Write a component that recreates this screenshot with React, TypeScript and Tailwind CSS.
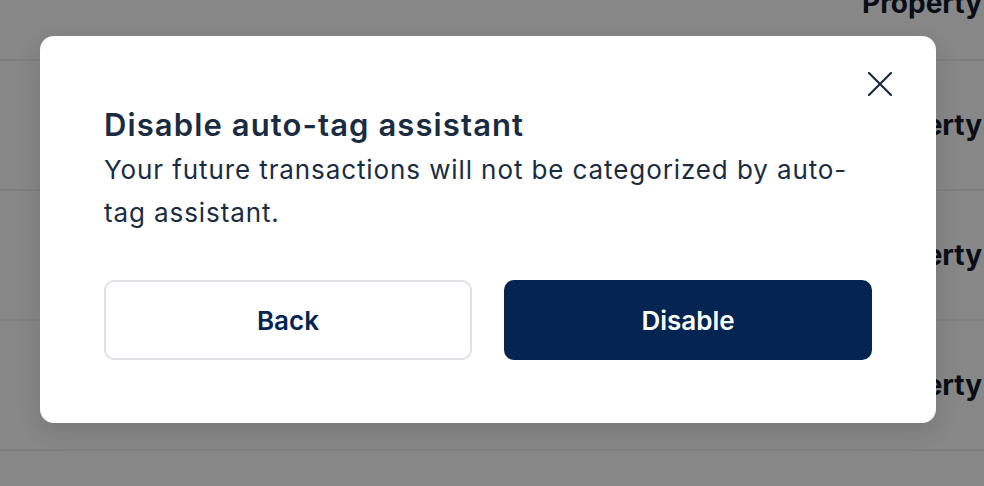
const rows = [0, 1, 2];

export default function App() {
  return (
    <div className="relative h-[486px] w-[984px] overflow-hidden bg-white font-['Inter',sans-serif]">
      {/* page behind the overlay */}
      <div className="flex flex-col">
        <div className="flex h-[61px] items-end border-b-2 border-[#f0f0f0] pb-[39px] pl-[862px]">
          <span className="whitespace-nowrap text-[28px] font-bold leading-[34px] text-[#0e1b2c]">
            Property
          </span>
        </div>
        {rows.map((r) => (
          <div
            key={r}
            className="flex h-[130px] items-center border-b-2 border-[#f0f0f0] pl-[862px]"
          >
            <span className="whitespace-nowrap text-[28px] font-bold text-[#0e1b2c]">
              Property
            </span>
          </div>
        ))}
      </div>

      {/* overlay */}
      <div className="absolute inset-0 bg-black/[0.47]" />

      {/* dialog */}
      <div className="absolute left-[40px] top-[36px] w-[896px] rounded-[14px] bg-white px-16 pb-[63px] pt-[68px] shadow-[0_8px_24px_rgba(0,0,0,0.12)]">
        <button className="absolute right-[44px] top-[36px] text-[#1b2b3e]">
          <svg width="24" height="24" viewBox="0 0 24 24" fill="none">
            <path
              d="M1 1L23 23M23 1L1 23"
              stroke="currentColor"
              strokeWidth="2.2"
              strokeLinecap="round"
            />
          </svg>
        </button>
        <h2 className="text-[31px] font-semibold leading-[42px] tracking-[1.1px] text-[#1a2c42]">
          Disable auto-tag assistant
        </h2>
        <p className="mt-[2px] text-[26px] leading-[43px] tracking-[0.9px] text-[#1a2c42]">
          Your future transactions will not be categorized by auto-tag assistant.
        </p>
        <div className="mt-[46px] grid grid-cols-2 gap-8">
          <button className="h-[80px] rounded-[10px] border-2 border-[#dde1e6] bg-white text-[26px] font-semibold text-[#042452]">
            Back
          </button>
          <button className="h-[80px] rounded-[10px] bg-[#042452] text-[26px] font-semibold text-white">
            Disable
          </button>
        </div>
      </div>
    </div>
  );
}
